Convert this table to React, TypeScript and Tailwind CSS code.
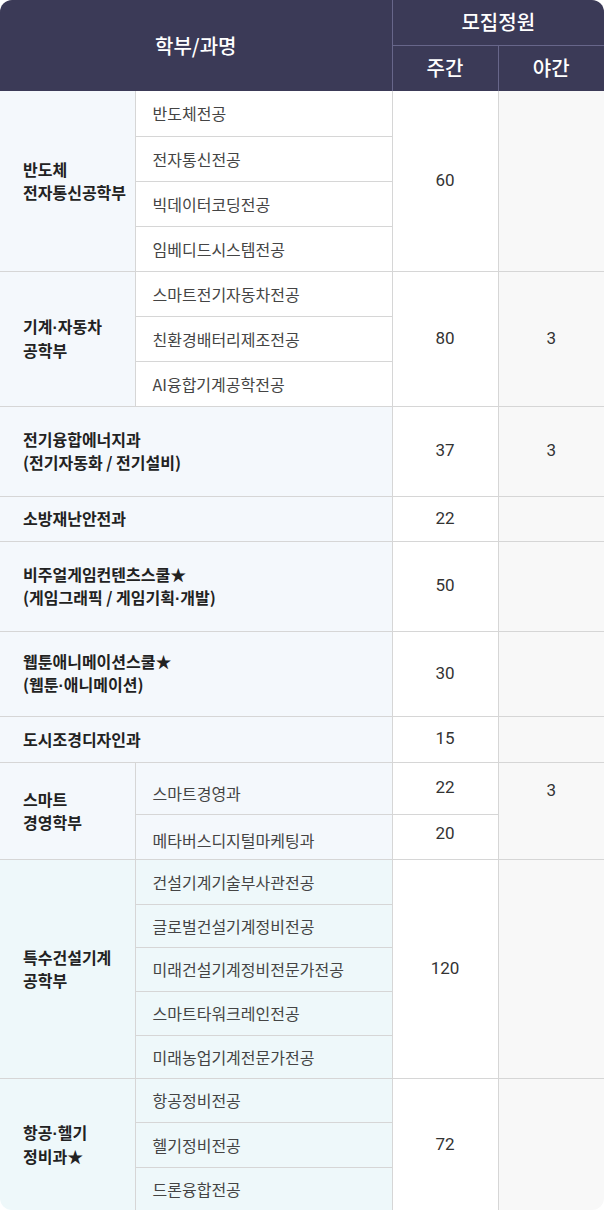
import React from "react";

const line = "border-[#d6d6d6]";
const groupBlue = `bg-[#f4f8fc] border-b border-r ${line} pl-[23px] text-left align-middle font-semibold text-[#222] leading-[23px]`;
const groupCyan = `bg-[#eef8fa] border-b border-r ${line} pl-[23px] text-left align-middle font-semibold text-[#222] leading-[23px]`;
const sub = `border-b border-r ${line} pl-[17px] text-left align-middle text-[#444]`;
const num = `bg-white border-b border-r ${line} text-center align-middle text-[#333] font-['Roboto',sans-serif] text-[17px]`;
const night = `bg-[#f8f8f8] border-b ${line} text-center align-middle text-[#333] font-['Roboto',sans-serif] text-[17px]`;

const Dot = () => <span className="font-['Liberation_Sans',sans-serif]">·</span>;

const Sub = ({ children, bg = "bg-white", last = false }: { children: React.ReactNode; bg?: string; last?: boolean }) => (
  <td className={`${sub} ${bg} ${last ? "border-b-0" : ""}`}>{children}</td>
);

export default function App() {
  return (
    <div className="w-[604px] bg-white font-['Noto_Sans_CJK_KR',sans-serif] text-[16px]">
      <div className="rounded-[12px] overflow-hidden">
        <table className="w-full table-fixed border-collapse">
          <colgroup>
            <col className="w-[135px]" />
            <col className="w-[257px]" />
            <col className="w-[106px]" />
            <col className="w-[106px]" />
          </colgroup>
          <thead className="bg-[#3b3a57] text-white text-[20px] font-medium">
            <tr className="h-[45px]">
              <th colSpan={2} rowSpan={2} className="border-r border-[#67668a] font-medium">
                학부/과명
              </th>
              <th colSpan={2} className="border-b border-[#67668a] font-medium">
                모집정원
              </th>
            </tr>
            <tr className="h-[46px]">
              <th className="border-r border-[#67668a] font-medium">주간</th>
              <th className="font-medium">야간</th>
            </tr>
          </thead>
          <tbody>
            {/* 반도체 전자통신공학부 */}
            <tr className="h-[45px]">
              <td rowSpan={4} className={groupBlue}>
                반도체
                <br />
                전자통신공학부
              </td>
              <Sub>반도체전공</Sub>
              <td rowSpan={4} className={num}>60</td>
              <td rowSpan={4} className={night}></td>
            </tr>
            <tr className="h-[45px]"><Sub>전자통신전공</Sub></tr>
            <tr className="h-[45px]"><Sub>빅데이터코딩전공</Sub></tr>
            <tr className="h-[45px]"><Sub>임베디드시스템전공</Sub></tr>

            {/* 기계·자동차 */}
            <tr className="h-[45px]">
              <td rowSpan={3} className={groupBlue}>
                기계<Dot />자동차
                <br />
                공학부
              </td>
              <Sub>스마트전기자동차전공</Sub>
              <td rowSpan={3} className={num}>80</td>
              <td rowSpan={3} className={night}>3</td>
            </tr>
            <tr className="h-[45px]"><Sub>친환경배터리제조전공</Sub></tr>
            <tr className="h-[45px]"><Sub>AI융합기계공학전공</Sub></tr>

            <tr className="h-[90px]">
              <td colSpan={2} className={groupBlue}>
                전기융합에너지과
                <br />
                (전기자동화 / 전기설비)
              </td>
              <td className={num}>37</td>
              <td className={night}>3</td>
            </tr>
            <tr className="h-[45px]">
              <td colSpan={2} className={groupBlue}>소방재난안전과</td>
              <td className={num}>22</td>
              <td className={night}></td>
            </tr>
            <tr className="h-[90px]">
              <td colSpan={2} className={groupBlue}>
                비주얼게임컨텐츠스쿨★
                <br />
                (게임그래픽 / 게임기획<Dot />개발)
              </td>
              <td className={num}>50</td>
              <td className={night}></td>
            </tr>
            <tr className="h-[85px]">
              <td colSpan={2} className={groupBlue}>
                웹툰애니메이션스쿨★
                <br />
                (웹툰<Dot />애니메이션)
              </td>
              <td className={num}>30</td>
              <td className={night}></td>
            </tr>
            <tr className="h-[46px]">
              <td colSpan={2} className={groupBlue}>도시조경디자인과</td>
              <td className={num}>15</td>
              <td className={night}></td>
            </tr>

            {/* 스마트 경영학부 */}
            <tr className="h-[52px]">
              <td rowSpan={2} className={groupBlue}>
                스마트
                <br />
                경영학부
              </td>
              <td className={`${sub} bg-[#f4f8fc] pt-[10px]`}>스마트경영과</td>
              <td className={num}>22</td>
              <td rowSpan={2} className={`${night} !align-top pt-[15px]`}>3</td>
            </tr>
            <tr className="h-[45px]">
              <td className={`${sub} bg-[#f4f8fc] pt-[6px]`}>메타버스디지털마케팅과</td>
              <td className={`${num} pb-[6px]`}>20</td>
            </tr>

            {/* 특수건설기계 공학부 */}
            <tr className="h-[45px]">
              <td rowSpan={5} className={groupCyan}>
                특수건설기계
                <br />
                공학부
              </td>
              <Sub bg="bg-[#eef8fa]">건설기계기술부사관전공</Sub>
              <td rowSpan={5} className={num}>120</td>
              <td rowSpan={5} className={night}></td>
            </tr>
            <tr className="h-[43px]"><Sub bg="bg-[#eef8fa]">글로벌건설기계정비전공</Sub></tr>
            <tr className="h-[44px]"><Sub bg="bg-[#eef8fa]">미래건설기계정비전문가전공</Sub></tr>
            <tr className="h-[44px]"><Sub bg="bg-[#eef8fa]">스마트타워크레인전공</Sub></tr>
            <tr className="h-[43px]"><Sub bg="bg-[#eef8fa]">미래농업기계전문가전공</Sub></tr>

            {/* 항공·헬기 정비과 */}
            <tr className="h-[44px]">
              <td rowSpan={3} className={`${groupCyan} border-b-0`}>
                항공<Dot />헬기
                <br />
                정비과★
              </td>
              <Sub bg="bg-[#eef8fa]">항공정비전공</Sub>
              <td rowSpan={3} className={`${num} border-b-0`}>72</td>
              <td rowSpan={3} className={`${night} border-b-0`}></td>
            </tr>
            <tr className="h-[45px]"><Sub bg="bg-[#eef8fa]">헬기정비전공</Sub></tr>
            <tr className="h-[43px]"><Sub bg="bg-[#eef8fa]" last>드론융합전공</Sub></tr>
          </tbody>
        </table>
      </div>
    </div>
  );
}
